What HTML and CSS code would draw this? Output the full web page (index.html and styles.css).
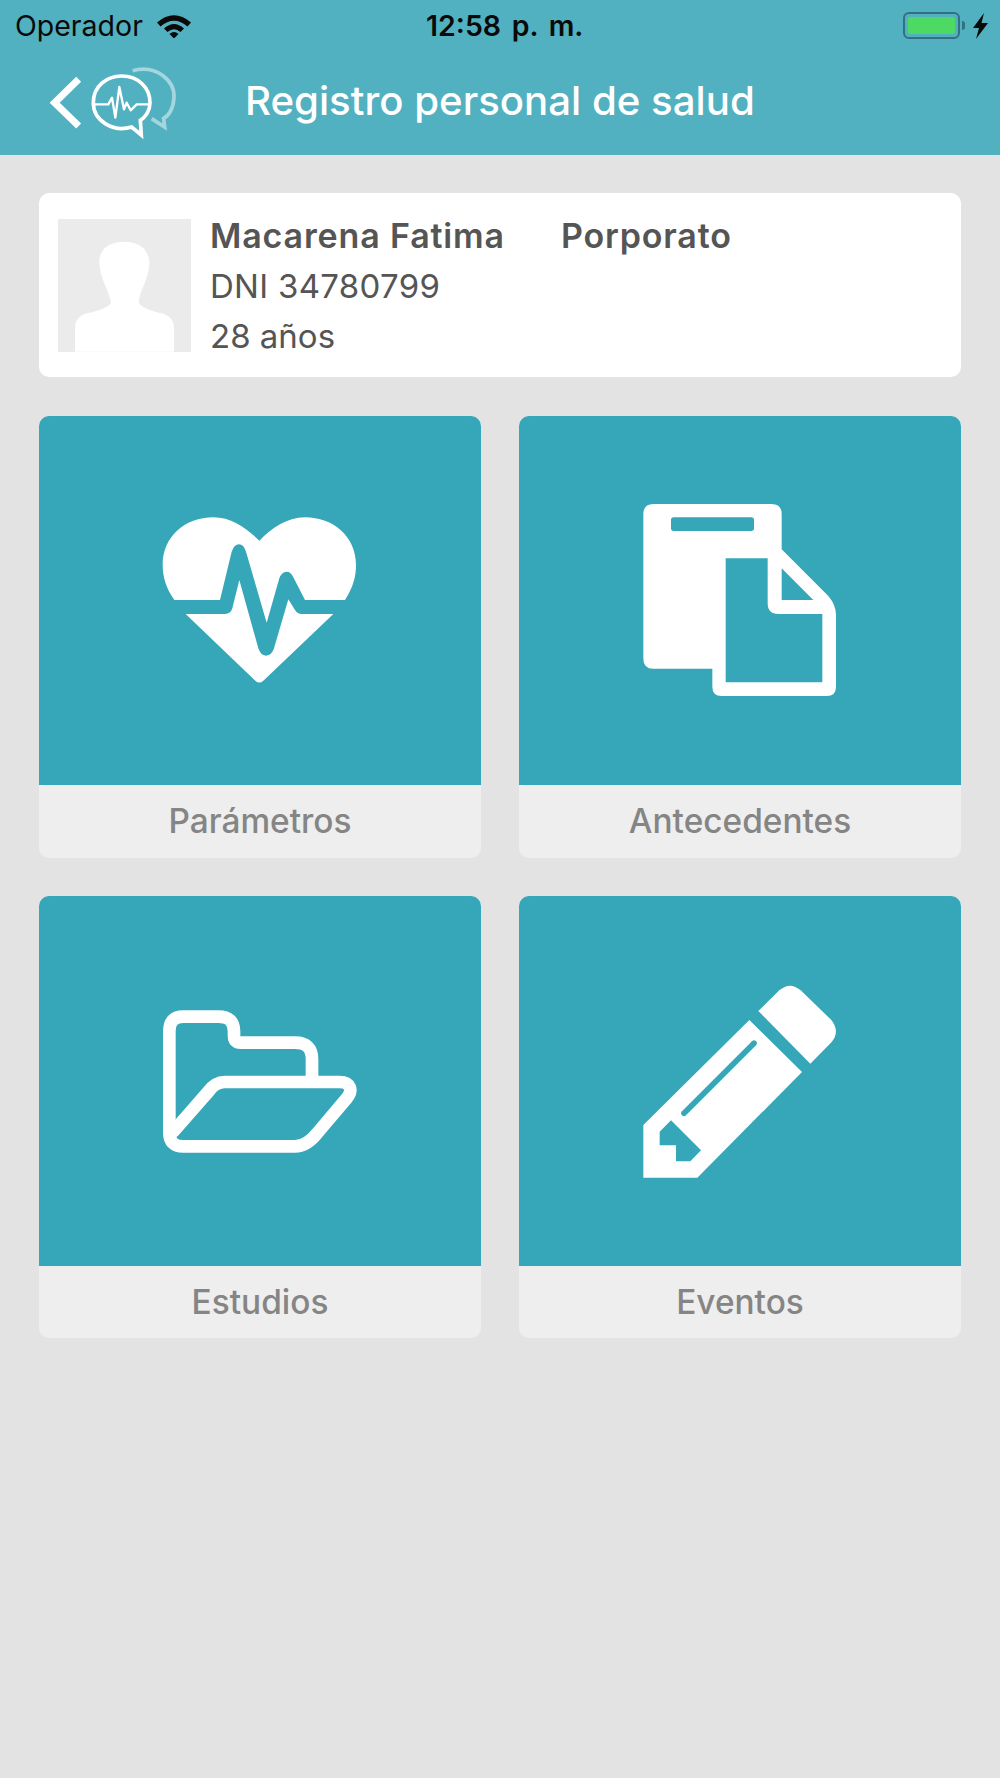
FILE: index.html
```html
<!DOCTYPE html>
<html>
<head>
<meta charset="UTF-8">
<title>Registro personal de salud</title>
<link rel="stylesheet" href="styles.css">
</head>
<body>
<div id="header">
	<div class="status">
		<div class="status-left">
			<span>Operador</span>
			<svg class="wifi" viewBox="0 0 34 24" width="34" height="24">
				<path d="M0,8.5 Q17,-6 34,8.5 L30.5,12.5 Q17,1 3.500,12.5Z"/>
				<path d="M7,15.500 Q17,6.500 27,15.500 L23.500,19 Q17,13.500 10.500,19Z" transform="translate(0 -1)"/>
				<path d="M12.500,20 Q17,16 21.500,20 L17,24.500Z"/>
			</svg>
		</div>
		<div class="status-time">12:58 p. m.</div>
		<div class="status-right">
			<div class="battery"><div class="battery-fill"></div></div>
			<div class="battery-nub"></div>
			<svg class="bolt" viewBox="0 0 15 26" width="15" height="26">
				<path d="M11,0 L0,15 H6 L3,26 L15,10 H8.500Z"/>
			</svg>
		</div>
	</div>
	<div class="nav">
		<svg class="logo" viewBox="120 180 420 240" width="140" height="80">
			<polyline class="back" points="236,235 164,305 236,375"/>
			<path class="bubble-back" d="M398,209 C470,190 525,240 522,290 C520,325 505,345 491,352 L494,378 L455,353"/>
			<path class="bubble" d="M395,378 C340,395 280,360 280,305 C280,255 320,225 365,225 C415,225 450,260 450,305 C450,330 435,350 421,358 L424,402Z"/>
			<polyline class="pulse" points="280,310 325,310 336,290 346,350 358,258 372,325 380,305 392,328 410,310 450,310"/>
		</svg>
		<h1>Registro personal de salud</h1>
	</div>
</div>
<div class="content">
	<div class="profile">
		<svg class="avatar" viewBox="84 102 399 399" width="133" height="133">
			<path d="M135,500 V430 Q135,395 170,385 Q240,370 243,350 Q235,320 225,300 Q208,260 208,230 C208,190 240,170 283,170 C330,170 358,195 358,235 Q358,260 342,300 Q328,330 326,350 Q330,370 395,385 Q432,395 432,430 V500Z"/>
		</svg>
		<div class="profile-text">
			<div class="name"><span>Macarena Fatima</span><span>Porporato</span></div>
			<div class="dni">DNI 34780799</div>
			<div>28 años</div>
		</div>
	</div>
	<div class="tiles">
		<div class="tile">
			<div class="tile-icon">
				<svg viewBox="0 0 720 660" width="240" height="220">
					<path d="M103,330 H240 L275,185 Q283,163 297,163 Q311,163 318,185 L380,398 L418,265 Q425,245 440,245 Q453,245 460,262 L495,330 H615 C640,290 648,260 648,225 C648,140 580,82 495,82 C440,82 395,115 358,152 C320,115 275,82 220,82 C135,82 68,140 68,225 C68,260 78,295 103,330Z"/>
					<path d="M137,372 H255 Q272,372 277,355 L298,270 L355,475 Q362,497 378,497 Q395,497 402,475 L445,328 L465,360 Q472,372 485,372 H580 L370,572 Q358,583 346,572Z"/>
				</svg>
			</div>
			<div class="tile-label">Parámetros</div>
		</div>
		<div class="tile">
			<div class="tile-icon">
				<svg viewBox="0 0 720 660" width="240" height="220">
					<path fill-rule="evenodd" d="M100,42 H455 Q485,42 485,72 V178 L625,318 Q648,345 648,375 V590 Q648,618 620,618 H305 Q277,618 277,590 V536 H100 Q70,536 70,506 V72 Q70,42 100,42Z M161,82 Q153,82 153,90 V115 Q153,123 161,123 H394 Q402,123 402,115 V90 Q402,82 394,82Z M317,205 V577 H607 V372 H475 Q443,372 443,340 V205Z M485,235 V330 H580Z"/>
				</svg>
			</div>
			<div class="tile-label">Antecedentes</div>
		</div>
		<div class="tile">
			<div class="tile-icon">
				<svg viewBox="0 0 720 600" width="240" height="200">
					<path class="outline" d="M88,455 V150 Q88,107 130,107 H235 Q282,107 282,150 V165 Q282,185 302,185 H465 Q516,185 516,235 V295"/>
					<path class="outline" d="M88,455 Q88,496 130,496 H465 Q500,496 532,456 L620,352 C640,328 632,303 598,303 H255 Q225,303 204,333 L100,452"/>
				</svg>
			</div>
			<div class="tile-label">Estudios</div>
		</div>
		<div class="tile">
			<div class="tile-icon">
				<svg viewBox="0 30 720 660" width="240" height="220">
					<path fill-rule="evenodd" d="M70,492 L388,177 L546,333 L232,650 H70Z M153,478 L119,512 V553 H168 V601 H211 L243,568Z"/>
					<line class="slot" x1="192" y1="457" x2="402" y2="247"/>
					<path d="M415,150 L478,88 Q510,60 542,88 L632,175 Q662,210 635,243 L571,308Z"/>
				</svg>
			</div>
			<div class="tile-label">Eventos</div>
		</div>
	</div>
</div>
</body>
</html>
```

FILE: styles.css
```css
* {
	padding: 0;
	margin: 0;
	box-sizing: border-box;
	font-family: 'Inter', 'Liberation Sans', sans-serif;
}
body {
	background-color: #e3e3e3;
	width: 1000px;
	min-height: 1778px;
}

#header {
	background-color: #52b1c0;
	height: 155px;
}
.status {
	display: grid;
	grid-template-columns: 411px auto 1fr;
	align-items: center;
	height: 51px;
	padding: 0 12px 0 15px;
	font-size: 28.5px;
	color: #0a0a0a;
}
.status-left {
	display: flex;
	align-items: center;
	gap: 14px;
}
.wifi path, .bolt path {
	fill: #0a0a0a;
}
.status-time {
	font-weight: 600;
	word-spacing: 3.5px;
}
.status-right {
	display: flex;
	align-items: center;
	justify-content: flex-end;
}
.battery {
	width: 57px;
	height: 27px;
	padding: 3px;
	border: 2px solid #34707f;
	border-radius: 6px;
}
.battery-fill {
	height: 100%;
	background-color: #4cd964;
	border-radius: 2px;
}
.battery-nub {
	width: 3px;
	height: 9px;
	margin-left: 2px;
	background-color: #34707f;
	border-radius: 0 3px 3px 0;
}
.bolt {
	margin-left: 8px;
}

.nav {
	display: flex;
	align-items: center;
	height: 99px;
	padding-left: 40px;
}
.logo {
	flex: none;
}
.logo .back {
	fill: none;
	stroke: #fff;
	stroke-width: 21;
}
.logo .bubble {
	fill: none;
	stroke: #fff;
	stroke-width: 11;
}
.logo .bubble-back {
	fill: none;
	stroke: #a3d6de;
	stroke-width: 11;
}
.logo .pulse {
	fill: none;
	stroke: #fff;
	stroke-width: 7;
	stroke-linejoin: round;
}
.nav h1 {
	margin-left: 65px;
	font-size: 40.2px;
	font-weight: 500;
	color: #fff;
}

.content {
	padding: 38px 39px;
}
.profile {
	display: flex;
	align-items: center;
	height: 184px;
	padding: 0 19px;
	background-color: #fff;
	border-radius: 10px;
}
.avatar {
	flex: none;
	background-color: #ebebeb;
}
.avatar path {
	fill: #fff;
}
.profile-text {
	margin-left: 19px;
	padding-top: 2px;
	font-size: 33px;
	line-height: 50px;
	color: #555;
}
.name {
	display: flex;
	gap: 56px;
	font-size: 34px;
	font-weight: 600;
	letter-spacing: 0.85px;
}
.dni {
	letter-spacing: 0.3px;
}

.tiles {
	display: grid;
	grid-template-columns: 442px 442px;
	gap: 38.5px 38px;
	margin-top: 38.6px;
}
.tile {
	height: 442px;
	background-color: #eee;
	border-radius: 10px;
	overflow: hidden;
}
.tile-icon {
	display: flex;
	align-items: center;
	justify-content: center;
	height: 369.5px;
	background-color: #35a7b8;
}
.tile-icon svg path {
	fill: #fff;
}
.tile-icon svg path.outline {
	fill: none;
	stroke: #fff;
	stroke-width: 38;
	stroke-linejoin: round;
	stroke-linecap: round;
}
.tile-icon .slot {
	stroke: #35a7b8;
	stroke-width: 17;
	stroke-linecap: round;
}
.tile-label {
	height: 72.5px;
	line-height: 72.5px;
	text-align: center;
	font-size: 33.4px;
	font-weight: 450;
	color: #858585;
}
```
